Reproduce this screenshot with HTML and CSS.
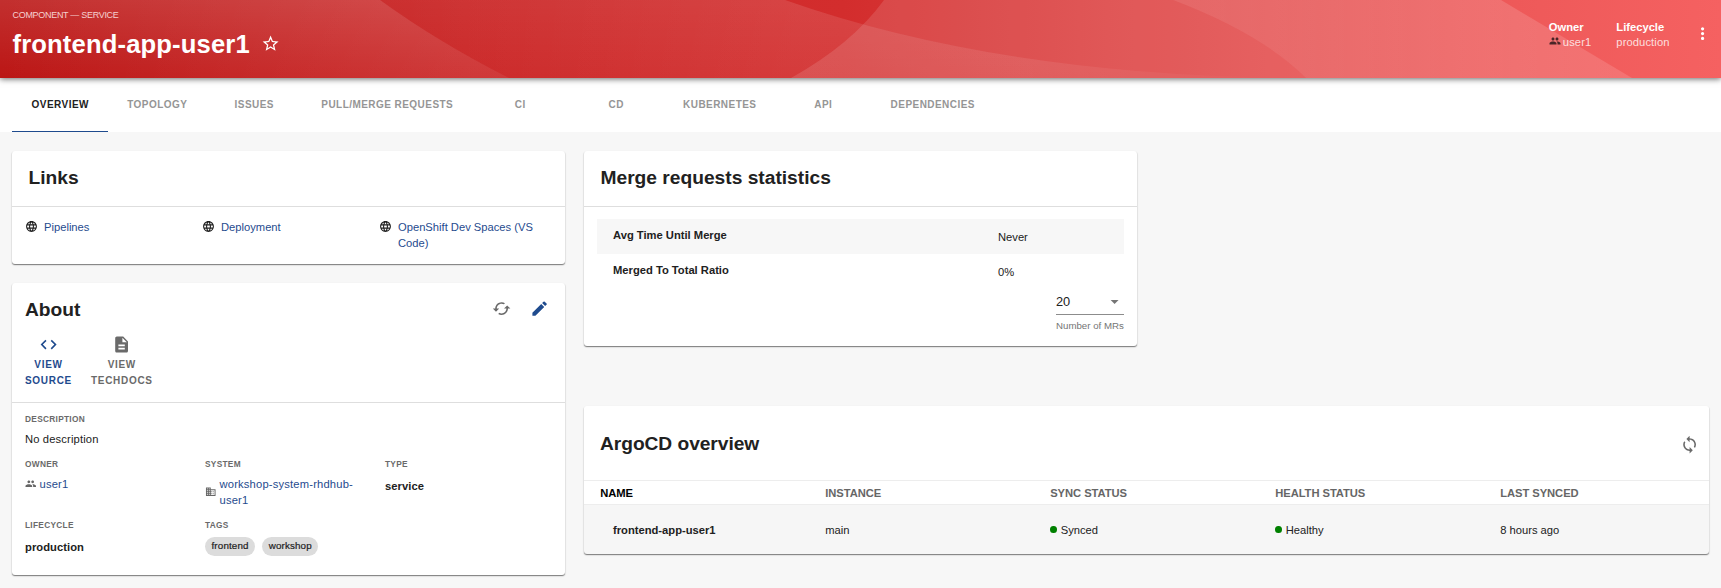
FILE: index.html
```html
<!DOCTYPE html>
<html lang="en">
<head>
<meta charset="utf-8">
<title>frontend-app-user1</title>
<link rel="stylesheet" href="styles.css">
</head>
<body>
<svg class="sprite" width="0" height="0">
  <defs>
    <symbol id="people" viewBox="0 0 24 24"><path d="M16 11c1.66 0 2.99-1.34 2.99-3S17.66 5 16 5c-1.66 0-3 1.34-3 3s1.34 3 3 3zm-8 0c1.66 0 2.99-1.34 2.99-3S9.66 5 8 5C6.34 5 5 6.34 5 8s1.34 3 3 3zm0 2c-2.33 0-7 1.17-7 3.5V19h14v-2.500c0-2.330-4.670-3.500-7-3.500zm8 0c-.29 0-.62.02-.97.05 1.160.84 1.970 1.970 1.970 3.450V19h6v-2.500c0-2.330-4.670-3.500-7-3.500z"/></symbol>
    <symbol id="globe" viewBox="0 0 24 24"><path d="M11.990 2C6.470 2 2 6.480 2 12s4.470 10 9.990 10C17.520 22 22 17.520 22 12S17.520 2 11.990 2zm6.930 6h-2.950c-.32-1.250-.78-2.450-1.380-3.560 1.840.63 3.370 1.910 4.330 3.560zM12 4.040c.83 1.200 1.480 2.530 1.910 3.960h-3.820c.43-1.430 1.080-2.760 1.910-3.960zM4.260 14C4.100 13.360 4 12.690 4 12s.1-1.360.26-2h3.380c-.08.66-.14 1.320-.14 2s.06 1.340.14 2H4.260zm.82 2h2.950c.32 1.250.78 2.450 1.380 3.560-1.840-.63-3.370-1.900-4.330-3.560zm2.950-8H5.080c.96-1.660 2.490-2.930 4.330-3.560C8.810 5.550 8.350 6.750 8.030 8zM12 19.960c-.83-1.200-1.480-2.530-1.910-3.960h3.820c-.43 1.430-1.080 2.760-1.910 3.960zM14.340 14H9.660c-.09-.66-.16-1.320-.16-2s.07-1.350.16-2h4.680c.09.65.16 1.320.16 2s-.07 1.340-.16 2zm.25 5.560c.6-1.110 1.060-2.310 1.380-3.560h2.950c-.96 1.650-2.490 2.930-4.330 3.560zM16.360 14c.08-.66.14-1.320.14-2s-.06-1.340-.14-2h3.380c.16.64.26 1.310.26 2s-.1 1.360-.26 2h-3.380z"/></symbol>
    <symbol id="sync" viewBox="0 0 24 24"><path d="M12 4V1L8 5l4 4V6c3.310 0 6 2.690 6 6 0 1.010-.25 1.970-.7 2.800l1.460 1.460C19.540 15.030 20 13.570 20 12c0-4.420-3.580-8-8-8zm0 14c-3.310 0-6-2.690-6-6 0-1.010.25-1.970.7-2.800L5.240 7.740C4.460 8.970 4 10.430 4 12c0 4.420 3.580 8 8 8v3l4-4-4-4v3z"/></symbol>
    <symbol id="cached" viewBox="0 0 24 24"><path d="M19 8l-4 4h3c0 3.310-2.690 6-6 6-1.010 0-1.970-.25-2.800-.7l-1.460 1.460C8.970 19.540 10.430 20 12 20c4.420 0 8-3.580 8-8h3l-4-4zM6 12c0-3.310 2.690-6 6-6 1.010 0 1.970.25 2.800.7l1.460-1.460C15.030 4.460 13.570 4 12 4c-4.420 0-8 3.580-8 8H1l4 4 4-4H6z"/></symbol>
    <symbol id="edit" viewBox="0 0 24 24"><path d="M3 17.250V21h3.750L17.810 9.940l-3.750-3.750L3 17.250zM20.710 7.040c.39-.39.39-1.020 0-1.410l-2.340-2.340c-.39-.39-1.020-.39-1.410 0l-1.830 1.830 3.750 3.750 1.830-1.830z"/></symbol>
    <symbol id="code" viewBox="0 0 24 24"><path d="M9.400 16.600L4.800 12l4.600-4.600L8 6l-6 6 6 6 1.400-1.400zm5.200 0l4.600-4.600-4.600-4.600L16 6l6 6-6 6-1.400-1.400z"/></symbol>
    <symbol id="docs" viewBox="0 0 24 24"><path d="M14 2H6c-1.100 0-1.990.9-1.990 2L4 20c0 1.100.89 2 1.990 2H18c1.100 0 2-.9 2-2V8l-6-6zm2 16H8v-2h8v2zm0-4H8v-2h8v2zm-3-5V3.500L18.500 9H13z"/></symbol>
    <symbol id="system" viewBox="0 0 24 24"><path d="M12 7V3H2v18h20V7H12zM6 19H4v-2h2v2zm0-4H4v-2h2v2zm0-4H4V9h2v2zm0-4H4V5h2v2zm4 12H8v-2h2v2zm0-4H8v-2h2v2zm0-4H8V9h2v2zm0-4H8V5h2v2zm10 12h-8v-2h2v-2h-2v-2h2v-2h-2V9h8v10zm-2-8h-2v2h2v-2zm0 4h-2v2h2v-2z"/></symbol>
    <symbol id="star" viewBox="0 0 24 24"><path d="M22 9.240l-7.190-.62L12 2 9.190 8.630 2 9.240l5.460 4.730L5.820 21 12 17.270 18.180 21l-1.630-7.030L22 9.240zM12 15.400l-3.760 2.270 1-4.280-3.320-2.880 4.380-.38L12 6.100l1.710 4.040 4.380.38-3.320 2.880 1 4.280L12 15.400z"/></symbol>
    <symbol id="more" viewBox="0 0 24 24"><path d="M12 8c1.100 0 2-.9 2-2s-.9-2-2-2-2 .9-2 2 .9 2 2 2zm0 2c-1.100 0-2 .9-2 2s.9 2 2 2 2-.9 2-2-.9-2-2-2zm0 6c-1.100 0-2 .9-2 2s.9 2 2 2 2-.9 2-2-.9-2-2-2z"/></symbol>
    <symbol id="caret" viewBox="0 0 24 24"><path d="M7 10l5 5 5-5z"/></symbol>
  </defs>
</svg>

<header class="header">
  <svg class="waves" viewBox="0 0 1721 78" preserveAspectRatio="none">
    <defs>
      <linearGradient id="w1" gradientUnits="userSpaceOnUse" x1="0" y1="78" x2="0" y2="0"><stop offset="0" stop-color="#fff" stop-opacity="0"/><stop offset="1" stop-color="#fff" stop-opacity=".11"/></linearGradient>
      <linearGradient id="w1b" x1="0" x2="1"><stop offset="0" stop-color="#fff" stop-opacity="0"/><stop offset="1" stop-color="#fff" stop-opacity=".08"/></linearGradient>
      <linearGradient id="w2" gradientUnits="userSpaceOnUse" x1="0" y1="78" x2="0" y2="0"><stop offset="0" stop-color="#fff" stop-opacity="0"/><stop offset="1" stop-color="#fff" stop-opacity=".05"/></linearGradient>
      <linearGradient id="w2b" gradientUnits="userSpaceOnUse" x1="400" y1="0" x2="1300" y2="0"><stop offset="0" stop-color="#fff" stop-opacity="0"/><stop offset=".45" stop-color="#fff" stop-opacity=".07"/><stop offset=".7" stop-color="#fff" stop-opacity=".07"/><stop offset="1" stop-color="#fff" stop-opacity="0"/></linearGradient>
      <linearGradient id="w4" x1="0" x2="1"><stop offset="0" stop-color="#fff" stop-opacity=".19"/><stop offset="1" stop-color="#fff" stop-opacity=".13"/></linearGradient>
    </defs>
    <path fill="url(#w1)" d="M0 0H380Q438 42 509 78H0Z"/>
    <path fill="url(#w1b)" d="M0 0H380Q438 42 509 78H0Z"/>
    <path fill="url(#w2)" d="M380 0H785Q1000 76 1300 78H509Q438 42 380 0Z"/>
    <path fill="url(#w2b)" d="M380 0H785Q1000 76 1300 78H509Q438 42 380 0Z"/>
    <path fill="#fff" fill-opacity=".12" d="M884 0Q852 44 791 78H1306Q1262 34 1173 0Z"/>
    <path fill="url(#w4)" d="M1173 0Q1262 34 1306 78H1632L1501 0Z"/>
  </svg>
  <div class="heading">
    <div class="kind">COMPONENT — SERVICE</div>
    <div class="title-row"><h1 class="title">frontend-app-user1</h1><svg class="star"><use href="#star"/></svg></div>
  </div>
  <div class="meta">
    <div class="meta-item meta-owner"><b>Owner</b><span class="owner"><svg><use href="#people"/></svg>user1</span></div>
    <div class="meta-item meta-life"><b>Lifecycle</b><span>production</span></div>
    <svg class="more"><use href="#more"/></svg>
  </div>
</header>

<nav class="tabs">
  <a class="tab active">OVERVIEW</a><a class="tab">TOPOLOGY</a><a class="tab">ISSUES</a><a class="tab">PULL/MERGE REQUESTS</a><a class="tab">CI</a><a class="tab">CD</a><a class="tab">KUBERNETES</a><a class="tab">API</a><a class="tab">DEPENDENCIES</a>
</nav>

<main class="content">
  <div class="col-left">
    <section class="card links">
      <h2 class="card-title">Links</h2>
      <div class="link-grid">
        <a class="link"><svg><use href="#globe"/></svg><span>Pipelines</span></a>
        <a class="link"><svg><use href="#globe"/></svg><span>Deployment</span></a>
        <a class="link"><svg><use href="#globe"/></svg><span>OpenShift Dev Spaces (VS<br>Code)</span></a>
      </div>
    </section>
    <section class="card about">
      <div class="about-head">
        <div class="about-title"><h2>About</h2>
          <div class="about-actions"><svg class="grey"><use href="#cached"/></svg><svg class="blue"><use href="#edit"/></svg></div>
        </div>
        <div class="views">
          <a class="view blue"><svg><use href="#code"/></svg><span>VIEW<br>SOURCE</span></a>
          <a class="view grey"><svg><use href="#docs"/></svg><span>VIEW<br>TECHDOCS</span></a>
        </div>
      </div>
      <div class="about-body">
        <div class="field wide"><h3>DESCRIPTION</h3><p>No description</p></div>
        <div class="field"><h3>OWNER</h3><a class="entity"><svg><use href="#people"/></svg><span>user1</span></a></div>
        <div class="field"><h3>SYSTEM</h3><a class="entity"><svg><use href="#system"/></svg><span>workshop-system-rhdhub-<br>user1</span></a></div>
        <div class="field"><h3>TYPE</h3><b class="value">service</b></div>
        <div class="field"><h3>LIFECYCLE</h3><b class="value">production</b></div>
        <div class="field"><h3>TAGS</h3><div class="chips"><span class="chip">frontend</span><span class="chip">workshop</span></div></div>
      </div>
    </section>
  </div>
  <div class="col-right">
    <section class="card merge">
      <h2 class="card-title">Merge requests statistics</h2>
      <div class="merge-body">
        <div class="stat shaded"><b>Avg Time Until Merge</b><span>Never</span></div>
        <div class="stat"><b>Merged To Total Ratio</b><span>0%</span></div>
        <div class="select-wrap">
          <div class="select"><span>20</span><svg><use href="#caret"/></svg></div>
          <div class="helper">Number of MRs</div>
        </div>
      </div>
    </section>
    <section class="card argo">
      <div class="argo-head"><h2>ArgoCD overview</h2><svg class="grey"><use href="#sync"/></svg></div>
      <div class="row thead"><span class="sorted">NAME</span><span>INSTANCE</span><span>SYNC STATUS</span><span>HEALTH STATUS</span><span>LAST SYNCED</span></div>
      <div class="row tbody"><b>frontend-app-user1</b><span>main</span><span><i class="dot"></i>Synced</span><span><i class="dot"></i>Healthy</span><span>8 hours ago</span></div>
    </section>
  </div>
</main>
</body>
</html>
```
FILE: styles.css
```css
* { box-sizing: border-box; }
body {
  margin: 0;
  width: 1721px;
  height: 588px;
  overflow: hidden;
  background: #f7f7f7;
  color: #212121;
  font: 11.2px/16px "Liberation Sans", Arial, sans-serif;
}
h1, h2, h3, p { margin: 0; }
svg { fill: currentColor; display: block; flex: none; }
.sprite { position: absolute; }
.blue { color: #1f4b8e; }
.grey { color: #6a6a6a; }

.header {
  position: relative;
  z-index: 1;
  height: 78px;
  display: flex;
  justify-content: space-between;
  padding: 8px 12px 0;
  color: #fff;
  background: linear-gradient(90deg, #bb1615 0, #cb2828 27%, #d32d2d 49%, #dd4242 66%, #ee5959 88%, #f56161 100%);
  box-shadow: 0 1px 6px rgba(0, 0, 0, .6);
}
.waves { position: absolute; inset: 0; width: 100%; height: 100%; }
.heading, .meta { position: relative; }
.kind { font-size: 9px; line-height: 14px; color: #f5d0d0; white-space: nowrap; letter-spacing: -.3px; padding-left: .5px; }
.title-row { display: flex; align-items: center; gap: 11px; margin-top: 6px; padding-left: .5px; }
.title { font-size: 25.600px; line-height: 32px; font-weight: 700; letter-spacing: .15px; }
.star { width: 19.200px; height: 19.200px; margin-top: -1px; }
.meta { display: flex; align-items: flex-start; }
.meta-item { display: flex; flex-direction: column; margin-top: 12px; line-height: 15px; }
.meta-item b { font-size: 11.200px; }
.meta-item > span { color: rgba(255, 255, 255, .8); letter-spacing: .1px; }
.meta-owner { width: 67.500px; }
.meta-life { width: 75.500px; }
.owner { display: flex; gap: 2px; line-height: 14px; }
.owner svg { width: 12px; height: 12px; color: #4a2527; }
.more { width: 19.200px; height: 19.200px; margin: 16px -3px 0 1px; }

.tabs {
  height: 54px;
  padding-left: 12px;
  display: grid;
  grid-template-columns: 96px 98px 96px 170px 96px 96px 111px 96px 123px;
  background: #fff;
}
.tab {
  display: flex;
  align-items: center;
  justify-content: center;
  padding-left: .5px;
  font-size: 10px;
  font-weight: 700;
  letter-spacing: .45px;
  color: #959595;
  border-bottom: 1px solid transparent;
  white-space: nowrap;
}
.tab.active { color: #212121; border-bottom-color: #1f4b8e; }

.content {
  display: grid;
  grid-template-columns: 553px 1125px;
  column-gap: 19px;
  padding: 19px 12px 0;
  align-items: start;
}
.card {
  background: #fff;
  border-radius: 3px;
  box-shadow: 0 1px 1px rgba(0, 0, 0, .42), 0 1px 2px rgba(0, 0, 0, .16);
  overflow: hidden;
}
h2 { font-size: 19.200px; line-height: 24px; font-weight: 700; }
.card-title { height: 56px; padding: 15px 16.500px 0; border-bottom: 1px solid #dedede; }

.links { height: 113px; margin-bottom: 19px; }
.link-grid { display: grid; grid-template-columns: 177px 177px 1fr; padding: 12px 13px 0; }
.link { display: flex; gap: 6px; color: #1f4b8e; }
.link svg { width: 13px; height: 13px; color: #212121; margin-top: 1px; }

.about { height: 292px; }
.about-head { height: 120px; padding: 15px 13px 0; border-bottom: 1px solid #dedede; }
.about-title { display: flex; justify-content: space-between; }
.about-actions { display: flex; gap: 19px; padding: 1px 3px 0 0; }
.about-actions svg { width: 19.200px; height: 19.200px; }
.views { display: flex; gap: 19px; margin-top: 13px; }
.view { display: flex; flex-direction: column; align-items: center; text-align: center; font-size: 10px; font-weight: 700; letter-spacing: .7px; }
.view svg { width: 19.200px; height: 19.200px; margin-bottom: 3px; }
.about-body { display: grid; grid-template-columns: 180px 180px 1fr; padding: 9px 13px 0; grid-template-rows: 45px 61px 60px; }
.wide { grid-column: 1 / -1; }
.wide p { letter-spacing: .15px; }
h3 { font-size: 8.300px; line-height: 15px; letter-spacing: .3px; color: #6a6a6a; margin-bottom: 4px; }
.value { display: block; margin-top: 6px; letter-spacing: .05px; }
.entity { display: flex; align-items: center; gap: 3px; color: #1f4b8e; letter-spacing: .18px; }
.entity svg { width: 11.500px; height: 11.500px; color: #666; }
.chips { display: flex; gap: 7px; }
.chip { height: 19px; line-height: 18px; padding: 0 6.500px; border-radius: 10px; background: #dcdcdc; font-size: 9.800px; letter-spacing: .15px; -webkit-text-stroke: .2px #212121; }

.merge { width: 553px; height: 195px; margin-bottom: 60px; }
.merge-body { padding: 12px 13px 0; }
.stat { height: 35px; display: grid; grid-template-columns: 385px 1fr; padding: 8px 16px 0; }
.stat span { margin-top: 2px; }
.shaded { background: #f7f7f7; }
.select-wrap { width: 68px; margin: 0 0 0 auto; }
.select { display: flex; justify-content: space-between; align-items: center; height: 26px; font-size: 12.800px; border-bottom: 1px solid #8c8c8c; }
.select svg { width: 19.200px; height: 19.200px; color: #757575; }
.helper { font-size: 9.700px; line-height: 14px; margin-top: 4px; color: #757575; white-space: nowrap; }

.argo { height: 148px; background: #f6f6f6; }
.argo-head { height: 74px; padding: 0 10px 0 16px; background: #fff; display: flex; justify-content: space-between; align-items: center; }
.argo-head h2 { margin-top: 2px; letter-spacing: -.05px; }
.argo-head svg { width: 19.200px; height: 19.200px; margin-top: 3px; }
.row { display: grid; grid-template-columns: repeat(5, 225px); align-items: center; }
.row > * { padding-left: 16.200px; }
.thead { height: 25px; background: #fff; border-top: 1px solid #ededed; border-bottom: 1px solid #ededed; font-weight: 700; color: #666; letter-spacing: -.05px; }
.thead .sorted { color: #000; }
.tbody { height: 49px; }
.tbody > b { padding-left: 29px; }
.dot { display: inline-block; width: 6.500px; height: 7px; border-radius: 50%; background: #008000; margin-right: 4px; vertical-align: 1px; }
```
